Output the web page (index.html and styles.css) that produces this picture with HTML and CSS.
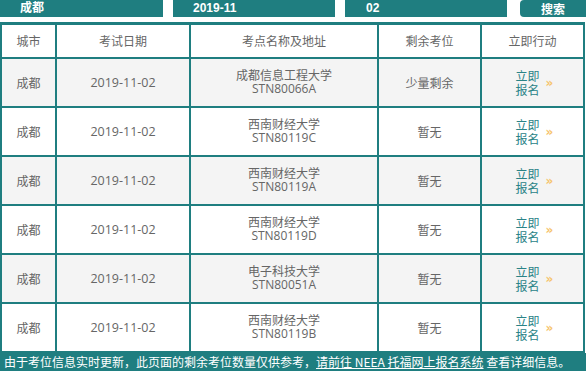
FILE: index.html
```html
<!DOCTYPE html>
<html lang="zh-CN">
<head>
<meta charset="utf-8">
<title>考位查询</title>
<link rel="stylesheet" href="styles.css">
</head>
<body>
<div class="page">
  <div class="search-bar">
    <div class="field field-city">成都</div>
    <div class="field field-month">2019-11</div>
    <div class="field field-day">02</div>
    <button class="search-btn">搜索</button>
  </div>
  <table class="seats">
    <thead>
      <tr>
        <th class="c-city">城市</th>
        <th class="c-date">考试日期</th>
        <th class="c-place">考点名称及地址</th>
        <th class="c-left">剩余考位</th>
        <th class="c-act">立即行动</th>
      </tr>
    </thead>
    <tbody>
      <tr class="alt">
        <td>成都</td><td class="date">2019-11-02</td>
        <td class="place"><span class="name">成都信息工程大学</span><span class="code">STN80066A</span></td>
        <td>少量剩余</td>
        <td><a class="reg"><span class="reg-text">立即报名</span><span class="arrow">»</span></a></td>
      </tr>
      <tr>
        <td>成都</td><td class="date">2019-11-02</td>
        <td class="place"><span class="name">西南财经大学</span><span class="code">STN80119C</span></td>
        <td>暂无</td>
        <td><a class="reg"><span class="reg-text">立即报名</span><span class="arrow">»</span></a></td>
      </tr>
      <tr class="alt">
        <td>成都</td><td class="date">2019-11-02</td>
        <td class="place"><span class="name">西南财经大学</span><span class="code">STN80119A</span></td>
        <td>暂无</td>
        <td><a class="reg"><span class="reg-text">立即报名</span><span class="arrow">»</span></a></td>
      </tr>
      <tr>
        <td>成都</td><td class="date">2019-11-02</td>
        <td class="place"><span class="name">西南财经大学</span><span class="code">STN80119D</span></td>
        <td>暂无</td>
        <td><a class="reg"><span class="reg-text">立即报名</span><span class="arrow">»</span></a></td>
      </tr>
      <tr class="alt">
        <td>成都</td><td class="date">2019-11-02</td>
        <td class="place"><span class="name">电子科技大学</span><span class="code">STN80051A</span></td>
        <td>暂无</td>
        <td><a class="reg"><span class="reg-text">立即报名</span><span class="arrow">»</span></a></td>
      </tr>
      <tr>
        <td>成都</td><td class="date">2019-11-02</td>
        <td class="place"><span class="name">西南财经大学</span><span class="code">STN80119B</span></td>
        <td>暂无</td>
        <td><a class="reg"><span class="reg-text">立即报名</span><span class="arrow">»</span></a></td>
      </tr>
    </tbody>
  </table>
  <div class="notice">由于考位信息实时更新，此页面的剩余考位数量仅供参考，<span class="link">请前往 NEEA 托福网上报名系统</span> 查看详细信息。</div>
</div>
</body>
</html>
```

FILE: styles.css
```css
html, body {
  margin: 0;
  padding: 0;
  background: #ffffff;
}

.page {
  width: 586px;
  font-family: "Open Sans", "Noto Sans CJK SC", sans-serif;
  font-size: 12px;
  color: #666666;
}

.search-bar {
  display: flex;
  height: 17px;
}

.field {
  height: 17px;
  line-height: 17px;
  background: #1f7e80;
  color: #ffffff;
  font-family: "Liberation Sans", "Noto Sans CJK SC", sans-serif;
  font-weight: bold;
  font-size: 12px;
  padding-left: 20px;
  box-sizing: border-box;
}

.field-city { width: 163px; }
.field-month { width: 162px; margin-left: 10px; }
.field-day { width: 162px; margin-left: 10px; padding-left: 21px; }

.search-btn {
  width: 66px;
  height: 17px;
  margin-left: 13px;
  padding: 0;
  border: 0;
  border-radius: 4px 0 0 4px;
  background: #1f7e80;
  color: #ffffff;
  font-family: "Noto Sans CJK SC", sans-serif;
  font-weight: bold;
  font-size: 12px;
  line-height: 17px;
}

.seats {
  margin-top: 5px;
  width: 585px;
  table-layout: fixed;
  border-collapse: separate;
  border-spacing: 0;
  border-left: 2px solid #1f7e80;
  border-top: 3px solid #1f7e80;
}

.seats th,
.seats td {
  box-sizing: border-box;
  padding: 0;
  border-right: 2px solid #1f7e80;
  border-bottom: 2px solid #1f7e80;
  text-align: center;
  vertical-align: middle;
  font-weight: normal;
  color: #666666;
}

.seats th {
  height: 34px;
  background: #ffffff;
}

.seats td {
  height: 49px;
  background: #ffffff;
}

.seats tr.alt td {
  background: #f4f4f4;
}

.c-city { width: 55px; }
.c-date { width: 134px; }
.c-place { width: 188px; }
.c-left { width: 103px; }
.c-act { width: 103px; }

.date {
  font-size: 12.5px;
}

.name,
.code {
  display: block;
  height: 12px;
  line-height: 12px;
}

.code {
  margin-top: 1px;
  font-size: 12px;
}

.reg {
  display: inline-flex;
  align-items: center;
  margin-left: 4px;
}

.reg-text {
  display: inline-block;
  width: 25px;
  line-height: 14px;
  color: #2a8387;
  text-align: left;
  font-family: "Noto Sans CJK SC", sans-serif;
}

.arrow {
  margin-left: 5px;
  color: #f6c46d;
  font-family: "DejaVu Sans", sans-serif;
  font-weight: bold;
  font-size: 12px;
  line-height: 12px;
}

.notice {
  height: 18px;
  line-height: 18px;
  background: #1f7e80;
  color: #ffffff;
  padding-left: 4px;
  font-family: "Noto Sans CJK SC", sans-serif;
  font-size: 12px;
  white-space: nowrap;
  overflow: hidden;
}

.notice .link {
  text-decoration: underline;
}
```
